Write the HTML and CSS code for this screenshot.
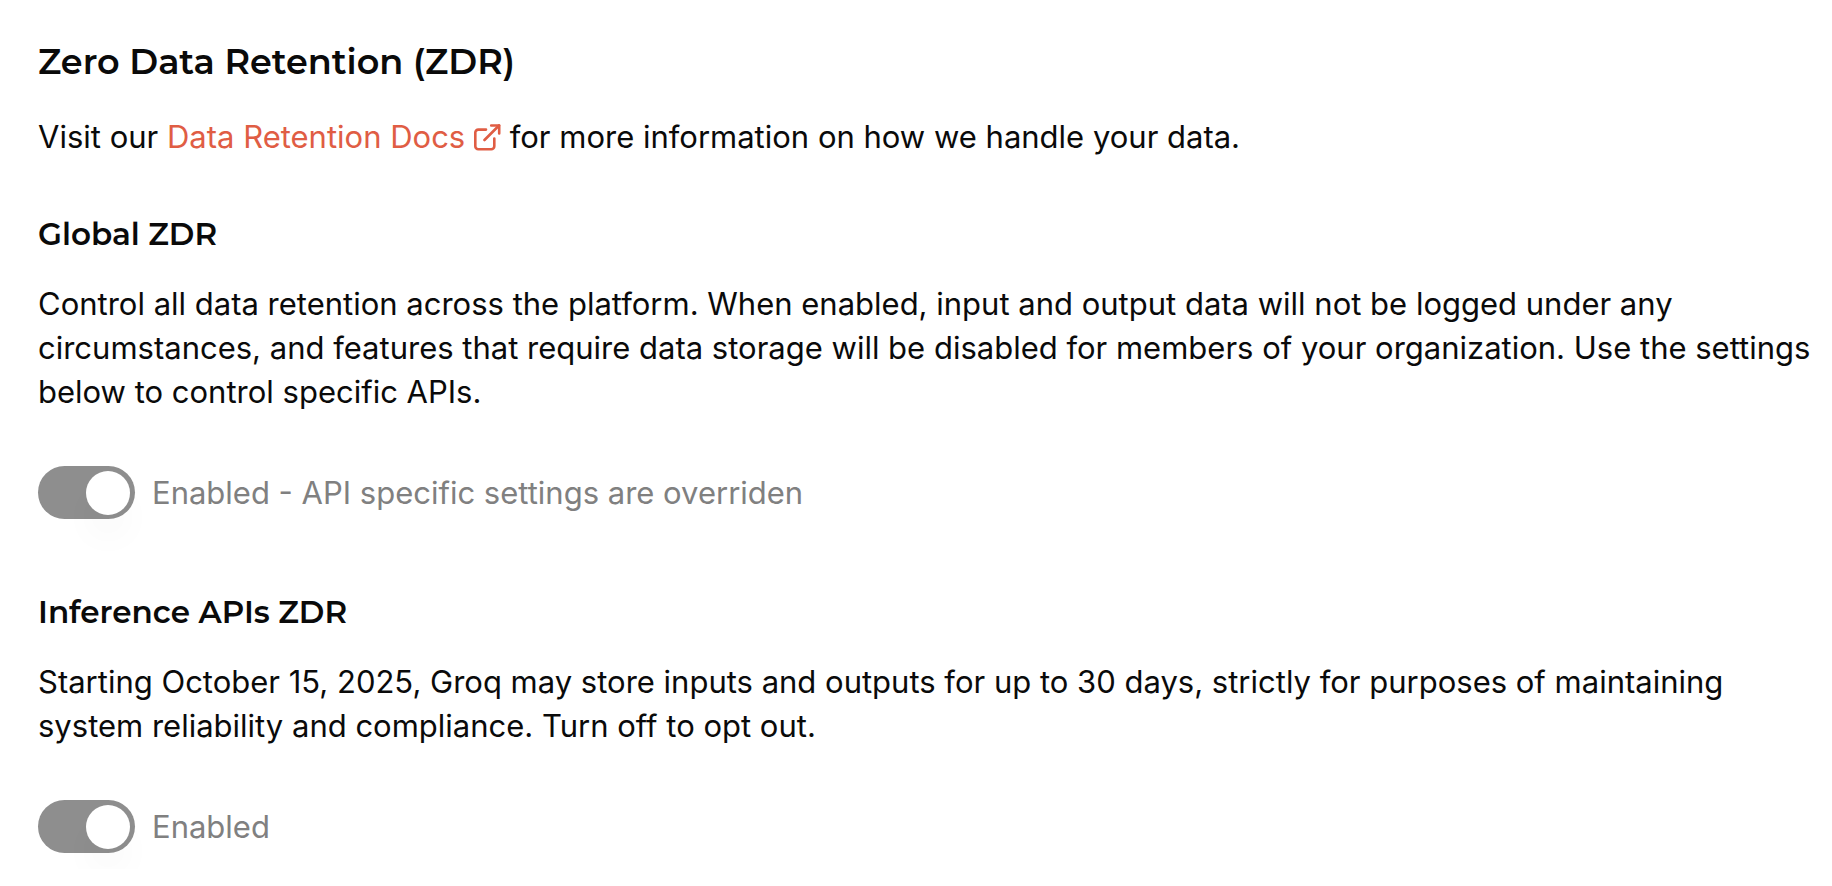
FILE: index.html
```html
<!DOCTYPE html>
<html lang="en">
<head>
    <meta charset="utf-8">
    <title>Zero Data Retention</title>
    <link rel="stylesheet" href="styles.css">
</head>
<body>
    <main class="settings">
        <h1>Zero Data Retention (ZDR)</h1>
        <p class="intro">Visit our
            <a class="docs-link" href="#">Data Retention Docs
                <svg class="icon" viewBox="0 0 27 27" aria-hidden="true">
                    <path d="M12 5.6H4.3a3 3 0 0 0-3 3v13.7a3 3 0 0 0 3 3h13a3 3 0 0 0 3-3V14.5"/>
                    <path d="M10.5 16L25 1.5"/>
                    <path d="M17.2 1.5h8v8"/>
                </svg></a>
            for more information on how we handle your data.</p>

        <section class="setting">
            <h2>Global ZDR</h2>
            <p>Control all data retention across the platform. When enabled, input and output data will not be logged under any circumstances, and features that require data storage will be disabled for members of your organization. Use the settings below to control specific APIs.</p>
            <div class="toggle">
                <input type="checkbox" role="switch" id="globalZdr" checked disabled>
                <label for="globalZdr">Enabled - API specific settings are overriden</label>
            </div>
        </section>

        <section class="setting">
            <h2>Inference APIs ZDR</h2>
            <p>Starting October 15, 2025, Groq may store inputs and outputs for up to 30 days, strictly for purposes of maintaining system reliability and compliance. Turn off to opt out.</p>
            <div class="toggle">
                <input type="checkbox" role="switch" id="inferenceZdr" checked disabled>
                <label for="inferenceZdr">Enabled</label>
            </div>
        </section>
    </main>
</body>
</html>
```

FILE: styles.css
```css
body {
    margin: 0;
    background-color: #fff;
    color: #0a0a0a;
    font-family: Inter, sans-serif;
    font-size: 31px;
    line-height: 44px;
}

.settings {
    padding: 37px 16px 16px 38px;
}

h1,
h2 {
    margin: 0;
    font-family: Montserrat, Inter, sans-serif;
    font-weight: 600;
}

h1 {
    font-size: 35px;
    line-height: 50px;
}

h2 {
    font-size: 31px;
    line-height: 44px;
}

p {
    margin: 0;
}

.intro {
    margin-top: 28px;
}

.setting {
    margin-top: 53px;
}

.setting + .setting {
    margin-top: 71px;
}

.setting p {
    margin-top: 26px;
}

.docs-link {
    color: #e05d44;
    text-decoration: none;
}

.icon {
    width: 27px;
    height: 27px;
    vertical-align: -3px;
    fill: none;
    stroke: currentColor;
    stroke-width: 2.6;
    stroke-linecap: round;
    stroke-linejoin: round;
}

.toggle {
    display: flex;
    align-items: center;
    gap: 17px;
    margin-top: 52px;
    color: #808080;
}

.toggle input {
    appearance: none;
    display: flex;
    align-items: center;
    width: 97px;
    height: 53px;
    margin: 0;
    padding: 0 5px;
    border-radius: 27px;
    box-sizing: border-box;
    background-color: #8e8e8e;
}

.toggle input::before {
    content: "";
    width: 44px;
    height: 44px;
    border-radius: 50%;
    background-color: #fff;
    box-shadow: 0 24px 36px -4px rgba(0, 0, 0, 0.04);
}

.toggle input:checked {
    justify-content: flex-end;
}
```
